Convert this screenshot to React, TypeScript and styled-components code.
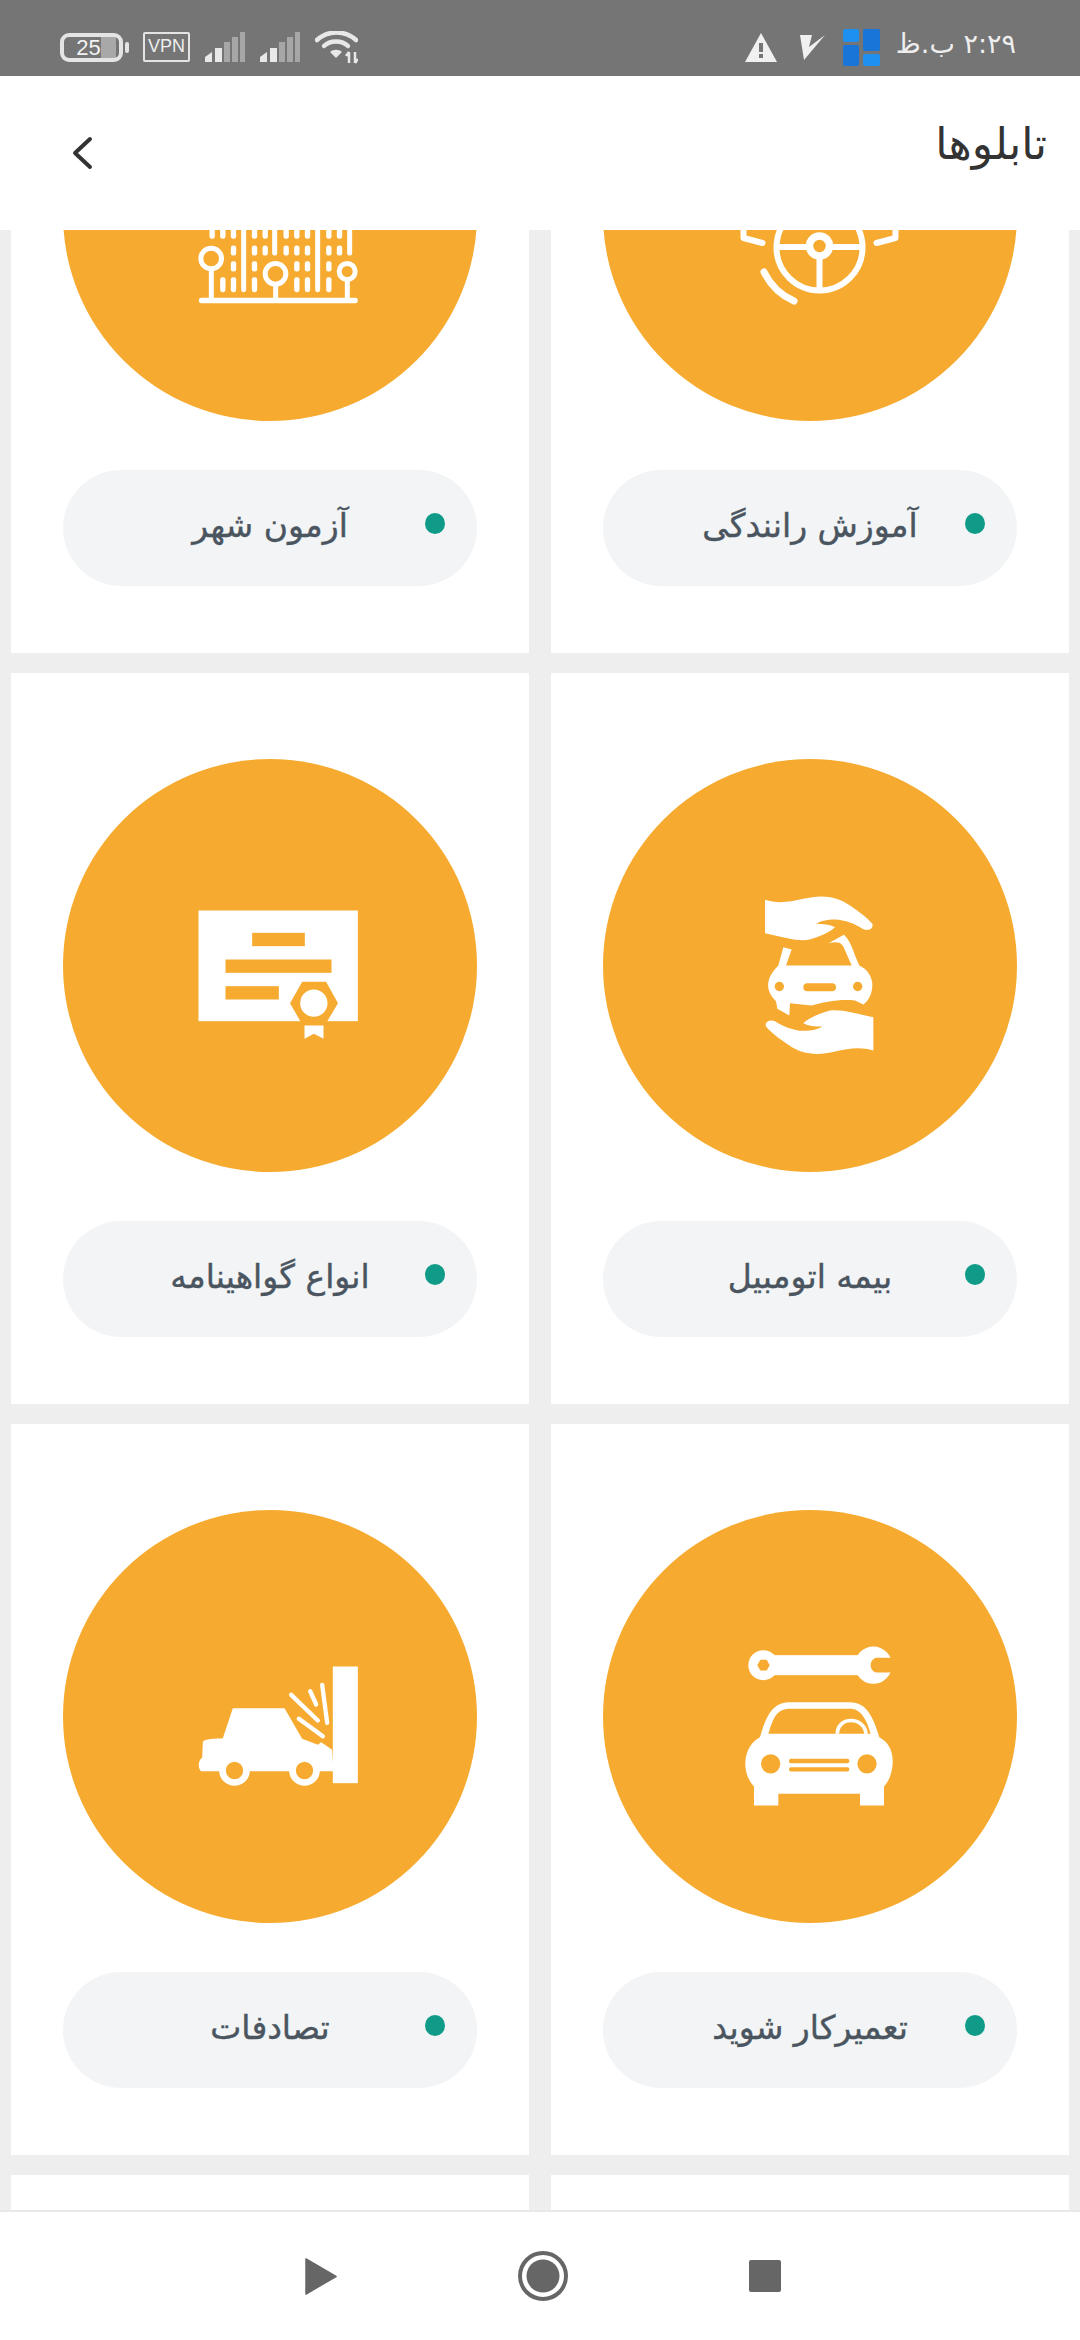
import React from "react";
import styled, { createGlobalStyle } from "styled-components";

const Global = createGlobalStyle`
  html, body { margin: 0; padding: 0; background: #eeeeee; }
  * { box-sizing: border-box; }
`;

const Page = styled.div`
  width: 1080px;
  height: 2340px;
  display: flex;
  flex-direction: column;
  overflow: hidden;
  background: #eeeeee;
  font-family: "DejaVu Sans", "Noto Sans", sans-serif;
`;

const StatusBar = styled.div`
  height: 76px;
  flex: none;
  background: #757575;
  display: flex;
  justify-content: space-between;
  align-items: center;
  padding: 18px 64px 0 60px;
`;

const StatusGroup = styled.div`
  display: flex;
  align-items: center;
  gap: 15px;
`;

const Battery = styled.div`
  position: relative;
  width: 63px;
  height: 29px;
  margin-right: 5px;
  border: 4px solid #e4e4e4;
  border-radius: 9px;
  background: linear-gradient(to right, transparent 68%, #a8a8a8 68%, #a8a8a8 94%, transparent 94%);
  color: #f2f2f2;
  font: 400 22px/21px "Liberation Sans", sans-serif;
  text-align: center;
  padding-right: 6px;
  &::after {
    content: "";
    position: absolute;
    right: -10px;
    top: 5px;
    width: 4px;
    height: 11px;
    border-radius: 2px;
    background: #e4e4e4;
  }
`;

const Vpn = styled.div`
  width: 47px;
  height: 30px;
  border: 2.5px solid #e4e4e4;
  border-radius: 2px;
  color: #eeeeee;
  font: 400 18px/25px "Liberation Sans", sans-serif;
  text-align: center;
`;

const Clock = styled.div`
  width: 121px;
  direction: rtl;
  white-space: nowrap;
  color: #eeeeee;
  font-size: 27px;
  line-height: 36px;
  margin-top: -6px;
`;

const StatusSvg = styled.svg<{ $after?: number }>`
  display: block;
  flex: none;
  margin-right: ${(p) => p.$after ?? 0}px;
`;

const Header = styled.header`
  height: 154px;
  flex: none;
  background: #ffffff;
  display: flex;
  justify-content: space-between;
  align-items: center;
  padding: 0 33px 0 71px;
`;

const Title = styled.h1`
  margin: 0 0 18px;
  color: #333333;
  font-size: 44px;
  font-weight: 400;
  line-height: 60px;
`;

const Scroller = styled.main`
  flex: 1;
  min-height: 0;
  overflow: hidden;
`;

const Grid = styled.div`
  direction: rtl;
  margin-top: -308px;
  padding: 0 11px;
  display: grid;
  grid-template-columns: 518px 518px;
  column-gap: 22px;
  row-gap: 20px;
`;

const Card = styled.section`
  height: 731px;
  background: #ffffff;
  padding: 86px 52px 0;
`;

const Disc = styled.div`
  width: 414px;
  height: 413px;
  border-radius: 50%;
  background: #f6ab30;
  display: flex;
  align-items: center;
  justify-content: center;
`;

const Pill = styled.div`
  margin-top: 49px;
  height: 116px;
  border-radius: 58px;
  background: #f2f4f6;
  display: grid;
  grid-template-columns: 1fr auto 1fr;
  align-items: center;
  padding: 0 32px;
`;

const Dot = styled.span`
  width: 20px;
  height: 21px;
  margin-bottom: 10px;
  border-radius: 50%;
  background: #0f9b88;
`;

const Label = styled.span`
  color: #4a5560;
  font-size: 33px;
  line-height: 44px;
  margin-bottom: 5px;
  white-space: nowrap;
  -webkit-text-stroke: 0.4px #4a5560;
`;

const Footer = styled.footer`
  height: 130px;
  flex: none;
  background: #ffffff;
  border-top: 2px solid #e8e8e8;
  display: flex;
  align-items: center;
  padding: 0 299px 0 305px;
  justify-content: space-between;
`;

const NavIcon = styled.svg`
  display: block;
  flex: none;
`;

const IconSvg = styled.svg`
  display: block;
  flex: none;
  overflow: visible;
`;

const O = "#f6ab30";

const Zoomed = ({ x, y, children }: { x: number; y: number; children: React.ReactNode }) => (
  <g transform={`translate(${x} ${y}) scale(${1 / 3})`}>{children}</g>
);

const Icon = ({ children }: { children: React.ReactNode }) => (
  <IconSvg width="240" height="240" viewBox="-120 -120 240 240">
    {children}
  </IconSvg>
);

const Wheel = () => (
  <Icon>
    <g transform="translate(9.5 0)" fill="none" stroke="#fff" strokeWidth="6" strokeLinecap="round" strokeLinejoin="round">
      <circle cx="0" cy="32.5" r="43" />
      <path d="M-40 32H-12M12 32H40M0 44V73" />
      <circle cx="0" cy="31" r="10" strokeWidth="7.5" />
      <path d="M-55.5 57A60 60 0 0 0 -25.5 86" strokeWidth="7" />
      <path d="M-76 6V23L-57 28M76 6V23L57 28" />
    </g>
  </Icon>
);

const winCols: [number, number, number][] = [
  ...[158, 190, 222, 285, 317, 380, 412, 444, 508, 540].map((x) => [x, 40, 45] as [number, number, number]),
  ...[222, 285, 317, 380, 412, 444, 508, 540].map((x) => [x, 105, 30] as [number, number, number]),
  ...[222, 285, 412, 444, 508].map((x) => [x, 152, 31] as [number, number, number]),
  ...[190, 222, 285, 412, 444, 508].map((x) => [x, 200, 45] as [number, number, number]),
];

const City = () => (
  <Icon>
    <Zoomed x={-110.5} y={-4.5}>
      <g fill="#fff">
        {winCols.map(([x, y, h]) => (
          <rect key={`${x}-${y}`} x={x - 8} y={y} width="16" height={h} rx="7" />
        ))}
        <rect x="245" y="20" width="15" height="225" rx="7" />
        <rect x="467" y="20" width="15" height="225" rx="7" />
        <rect x="338" y="20" width="15" height="115" rx="7" />
        <rect x="563" y="20" width="15" height="115" rx="7" />
        <rect x="118" y="262" width="477" height="16" rx="8" />
        <rect x="148" y="170" width="15" height="95" />
        <rect x="341" y="220" width="15" height="45" />
        <rect x="556" y="210" width="15" height="55" />
      </g>
      <g fill={O} stroke="#fff" strokeWidth="15">
        <circle cx="155" cy="144" r="31" />
        <circle cx="348" cy="190" r="31" />
        <circle cx="563" cy="183" r="24" />
      </g>
    </Zoomed>
  </Icon>
);

const hand =
  "M75 58C110 70 150 65 190 55C240 42 290 45 330 75C360 95 385 115 397 130C402 145 385 152 370 146C345 130 315 118 285 117C260 117 240 122 228 130C250 130 270 132 285 140C270 155 235 170 205 178C175 183 130 170 75 158Z";

const Insurance = () => (
  <Icon>
    <Zoomed x={-70} y={-85.5}>
      <path d={hand} fill="#fff" />
      <path d={hand} fill="#fff" transform="rotate(180 237.5 284)" />
      <path
        fill="#fff"
        d="M130 200L155 207L138 255H335L310 198C300 182 285 185 265 188C285 178 300 170 312 163C325 175 335 195 345 225L358 255C380 265 395 285 397 310C398 340 385 362 370 372L345 360C300 355 250 365 215 375L150 368L148 405L112 385L108 362C90 345 82 325 85 305C88 285 105 265 115 255Z"
      />
      <circle cx="118" cy="318" r="14" fill={O} />
      <circle cx="353" cy="318" r="14" fill={O} />
      <rect x="190" y="308" width="98" height="24" rx="12" fill={O} />
    </Zoomed>
  </Icon>
);

const Certificate = () => (
  <Icon>
    <Zoomed x={-90.5} y={-75.5}>
      <rect x="57" y="60" width="478" height="332" fill="#fff" />
      <g fill={O}>
        <rect x="218" y="127" width="158" height="40" />
        <rect x="138" y="207" width="318" height="40" />
        <rect x="138" y="287" width="160" height="40" />
        <path d="M370 277H438L472 338L440 392L432 405H375L366 392L335 338Z" stroke={O} strokeWidth="6" strokeLinejoin="round" />
      </g>
      <circle cx="403" cy="338" r="41" fill="#fff" />
      <path d="M375 405H432V445L403 430L375 445Z" fill="#fff" />
    </Zoomed>
  </Icon>
);

const Mechanic = () => (
  <Icon>
    <Zoomed x={-90} y={-86.5}>
      <g fill="#fff">
        <rect x="150" y="74" width="290" height="60" />
        <circle cx="130" cy="104" r="45" />
        <circle cx="460" cy="104" r="56" />
      </g>
      <path d="M112 104L121 88H140L149 104L140 120H121Z" fill={O} />
      <path d="M520 82H470C458 84 452 94 452 104C452 114 458 124 470 126H520Z" fill={O} />
      <path
        fill="#fff"
        d="M120 320C140 250 160 215 210 215H390C440 215 460 260 478 320C505 335 520 360 518 400C516 430 505 455 492 468V525H420V490H175V525H102V468C85 450 75 425 76 395C78 355 100 330 120 320Z"
      />
      <path d="M145 310C160 260 170 238 205 235H395C425 238 440 270 452 310Z" fill={O} />
      <path d="M352 310C352 285 370 270 393 270C416 270 436 285 438 310" fill="none" stroke="#fff" strokeWidth="11" />
      <g fill={O}>
        <circle cx="152" cy="400" r="29" />
        <circle cx="441" cy="400" r="29" />
        <rect x="207" y="385" width="181" height="13" rx="6" />
        <rect x="207" y="410" width="181" height="13" rx="6" />
      </g>
    </Zoomed>
  </Icon>
);

const Crash = () => (
  <Icon>
    <Zoomed x={-90.5} y={-76.5}>
      <rect x="460" y="78" width="75" height="350" fill="#fff" />
      <path
        fill="#fff"
        d="M160 203H315L368 295L415 313L425 305L458 328L462 392H65C55 385 55 360 68 352L70 305C72 298 80 295 130 293Z"
      />
      <g fill={O} stroke="#fff" strokeWidth="20">
        <circle cx="165" cy="390" r="36" />
        <circle cx="375" cy="390" r="36" />
      </g>
      <g stroke="#fff" strokeWidth="13" strokeLinecap="round">
        <path d="M335 163L415 240M392 152L410 192M428 133L443 247M358 235L430 287" />
      </g>
    </Zoomed>
  </Icon>
);

const Signal = () => (
  <StatusSvg width="40" height="30" viewBox="0 0 40 30">
    <path d="M0 30V25L7 20V30Z" fill="#e8e8e8" />
    <rect x="10" y="16" width="7" height="14" fill="#e8e8e8" />
    <rect x="19" y="10" width="6" height="20" fill="#a6a6a6" />
    <rect x="27" y="5" width="6" height="25" fill="#a6a6a6" />
    <rect x="35" y="0" width="5" height="30" fill="#a6a6a6" />
  </StatusSvg>
);

const Wifi = () => (
  <StatusSvg width="43" height="33" viewBox="0 0 43 33">
    <g fill="none" stroke="#e8e8e8" strokeWidth="4.5" strokeLinecap="round">
      <path d="M2 9C13 -1 30 -1 41 9" />
      <path d="M9 15C15 9 27 9 33 15" />
    </g>
    <path d="M15 21C18 18 24 18 27 21L21 27Z" fill="#e8e8e8" />
    <path d="M34 21V32M34 21L31 25M40 32V21M40 32L43 28" fill="none" stroke="#e8e8e8" strokeWidth="2.5" />
  </StatusSvg>
);

const Warning = () => (
  <StatusSvg $after={8} width="32" height="29" viewBox="0 0 32 29">
    <path d="M16 0L32 29H0Z" fill="#f0f0f0" />
    <rect x="14" y="10" width="4" height="9" fill="#757575" />
    <rect x="14" y="21" width="4" height="4" fill="#757575" />
  </StatusSvg>
);

const Vee = () => (
  <StatusSvg $after={3} width="25" height="26" viewBox="0 0 25 26">
    <path d="M0 1H12L9 13L25 1L4 26Z" fill="#f0f0f0" />
  </StatusSvg>
);

const Tile = () => (
  <StatusSvg width="37" height="37" viewBox="0 0 37 37">
    <rect x="0" y="0" width="16" height="13" rx="2" fill="#1e90f0" />
    <rect x="0" y="16" width="16" height="21" rx="2" fill="#1976d8" />
    <rect x="20" y="0" width="17" height="22" rx="2" fill="#1976d8" />
    <rect x="20" y="25" width="17" height="12" rx="2" fill="#1e90f0" />
  </StatusSvg>
);

const items: { label?: string; icon?: React.ReactNode }[] = [
  { label: "آموزش رانندگی", icon: <Wheel /> },
  { label: "آزمون شهر", icon: <City /> },
  { label: "بیمه اتومبیل", icon: <Insurance /> },
  { label: "انواع گواهینامه", icon: <Certificate /> },
  { label: "تعمیرکار شوید", icon: <Mechanic /> },
  { label: "تصادفات", icon: <Crash /> },
  {},
  {},
];

export default function App() {
  return (
    <Page>
      <Global />
      <StatusBar>
        <StatusGroup>
          <Battery>25</Battery>
          <Vpn>VPN</Vpn>
          <Signal />
          <Signal />
          <Wifi />
        </StatusGroup>
        <StatusGroup>
          <Warning />
          <Vee />
          <Tile />
          <Clock>۲:۲۹ ب.ظ</Clock>
        </StatusGroup>
      </StatusBar>
      <Header>
        <NavIcon width="22" height="34" viewBox="0 0 22 34">
          <path d="M19 3L4 17L19 31" fill="none" stroke="#333" strokeWidth="4" strokeLinecap="round" strokeLinejoin="round" />
        </NavIcon>
        <Title>تابلوها</Title>
      </Header>
      <Scroller>
        <Grid>
          {items.map((it, i) => (
            <Card key={i}>
              {it.label && (
                <>
                  <Disc>{it.icon}</Disc>
                  <Pill>
                    <Dot />
                    <Label>{it.label}</Label>
                    <span />
                  </Pill>
                </>
              )}
            </Card>
          ))}
        </Grid>
      </Scroller>
      <Footer>
        <NavIcon width="32" height="37" viewBox="0 0 32 37">
          <path d="M1 1L31 18.5L1 36Z" fill="#666" stroke="#666" strokeWidth="1.5" strokeLinejoin="round" />
        </NavIcon>
        <NavIcon width="50" height="50" viewBox="0 0 50 50">
          <circle cx="25" cy="25" r="23" fill="none" stroke="#666" strokeWidth="4" />
          <circle cx="25" cy="25" r="16.5" fill="#666" />
        </NavIcon>
        <NavIcon width="32" height="32" viewBox="0 0 32 32">
          <rect width="32" height="32" rx="2" fill="#666" />
        </NavIcon>
      </Footer>
    </Page>
  );
}
